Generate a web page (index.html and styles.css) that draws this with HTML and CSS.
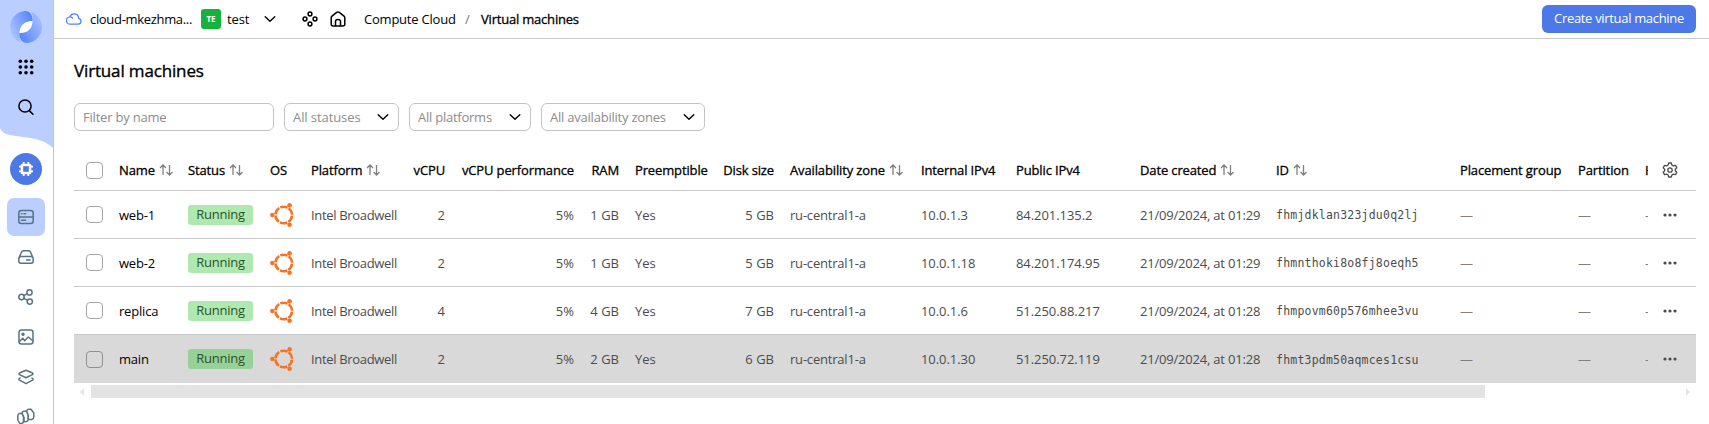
FILE: index.html
```html
<!DOCTYPE html>
<html lang="en">
<head>
<meta charset="utf-8">
<title>Virtual machines</title>
<link rel="stylesheet" href="styles.css">
</head>
<body>
<svg class="sprite" aria-hidden="true">
  <symbol id="chevron" viewBox="0 0 12 8"><path d="M1.200 1.700 6 6.200l4.800-4.500" fill="none" stroke="currentColor" stroke-width="1.400" stroke-linecap="round" stroke-linejoin="round"/></symbol>
  <symbol id="sort" viewBox="0 0 14 12"><path d="M1 4 4 1l3 3M4 1v10M7.500 8l3 3 3-3M10.500 11V1" fill="none" stroke="currentColor" stroke-width="1.300"/></symbol>
  <symbol id="dots" viewBox="0 0 16 6"><g fill="currentColor"><circle cx="3" cy="3" r="1.600"/><circle cx="8" cy="3" r="1.600"/><circle cx="13" cy="3" r="1.600"/></g></symbol>
  <symbol id="ubuntu" viewBox="0 0 24 24"><circle cx="13.700" cy="12" r="8.300" fill="none" stroke="#f47421" stroke-width="2.500" stroke-dasharray="7.500 1.190" stroke-dashoffset="-.6"/><g fill="#f47421"><circle cx="2.300" cy="12" r="2.200"/><circle cx="19.600" cy="2.300" r="2.300"/><circle cx="19.600" cy="21.700" r="2.300"/></g></symbol>
</svg>
<div class="app">
  <aside class="sidebar">
    <div class="brand">
      <svg class="brand-shape" viewBox="0 0 53 149"><path d="M0 0h53v148C42 137 25 138 10 135 4 134 1 131 0 128z" fill="#bacfff"/></svg>
      <svg class="logo" viewBox="0 0 32 32">
        <defs>
          <linearGradient id="lg1" x1="1" y1="0" x2="0" y2=".6"><stop offset="0" stop-color="#4d80fb"/><stop offset="1" stop-color="#a9c2ff"/></linearGradient>
          <linearGradient id="lg2" x1="0" y1="1" x2="1" y2=".3"><stop offset="0" stop-color="#4d80fb"/><stop offset="1" stop-color="#a4bfff"/></linearGradient>
        </defs>
        <path d="M15 0c5 0 8 4 7.500 10-9 .5-12 6-12.500 12-1 3-1 6 .5 9A16 16 0 0 1 15 0z" fill="url(#lg1)"/>
        <path d="M17 32c-5 0-8-4-7.500-10 9-.5 12-6 12.500-12 1-3 1-6-.5-9A16 16 0 0 1 17 32z" fill="url(#lg2)"/>
        <path d="M22.500 10C14 10 9.500 15 9.500 22c8.500 0 13-4.500 13-12z" fill="#fff"/>
      </svg>
      <svg class="icon apps" viewBox="0 0 16 16"><g fill="#000"><circle cx="2.300" cy="2.300" r="1.800"/><circle cx="8" cy="2.300" r="1.800"/><circle cx="13.700" cy="2.300" r="1.800"/><circle cx="2.300" cy="8" r="1.800"/><circle cx="8" cy="8" r="1.800"/><circle cx="13.700" cy="8" r="1.800"/><circle cx="2.300" cy="13.700" r="1.800"/><circle cx="8" cy="13.700" r="1.800"/><circle cx="13.700" cy="13.700" r="1.800"/></g></svg>
      <svg class="icon search" viewBox="0 0 16 16"><circle cx="7" cy="7" r="6.100" fill="none" stroke="#000" stroke-width="1.500"/><path d="m11.300 11.600 3.700 3.700" stroke="#000" stroke-width="1.500" stroke-linecap="round"/></svg>
    </div>
    <div class="service"><svg class="icon" viewBox="0 0 16 16"><path d="M5.700 1v14M10.300 1v14M1 5.700h14M1 10.300h14" stroke="#fff" stroke-width="1.800"/><rect x="2.700" y="2.700" width="10.600" height="10.600" rx="1.500" fill="#fff"/><rect x="5.200" y="5.200" width="5.600" height="5.600" fill="#4d79e8"/></svg></div>
    <nav class="nav">
      <a class="nav-item nav-item-active"><svg class="icon" viewBox="0 0 16 16"><rect x=".8" y="1.500" width="14.400" height="13" rx="2.500"/><path d="M1 8h14M3.500 4.800h.5M6 4.800h1.500M3.500 11.200h4"/></svg></a>
      <a class="nav-item"><svg class="icon" viewBox="0 0 16 16"><path d="M.8 9.300 3.300 3.500Q4 1.800 5.500 1.800h5q1.500 0 2.200 1.700l2.500 5.800V12q0 2.200-2.200 2.200H3Q.8 14.200.8 12zM1 9q.8-1.500 2-1.500h10q1.200 0 2 1.500M8.500 11h3.500"/></svg></a>
      <a class="nav-item"><svg class="icon" viewBox="0 0 16 16"><circle cx="3.500" cy="8" r="2.700"/><circle cx="11.500" cy="3.400" r="2.600"/><circle cx="11.800" cy="12.600" r="2.600"/><path d="m5.900 6.700 3.200-1.900M5.900 9.300l3.400 1.900"/></svg></a>
      <a class="nav-item"><svg class="icon" viewBox="0 0 16 16"><rect x="1" y="1" width="14" height="14" rx="2.500"/><circle cx="5" cy="5.300" r="1" fill="#587383"/><path d="m1.500 12.500 3.200-3.200 2 2.500L10.300 8l4.200 3.500"/></svg></a>
      <a class="nav-item"><svg class="icon" viewBox="0 0 16 16"><path d="M8 1.200 14.500 4q1 .7 0 1.600L8 8.700 1.500 5.600Q.5 4.700 1.500 4zM2 9l-.8.700q-.8.800.3 1.500L8 14.600l6.500-3.400q1.100-.7.300-1.500L14 9"/></svg></a>
      <a class="nav-item"><svg class="icon icon-wide" viewBox="0 0 18 18"><path d="M5 5.500H2.300Q.8 6 .8 8v4l2 3.500 2.500-.3q1.200-.5 1.200-2V9zM9.500 3.300H7Q5 3.500 5.200 5.500L7 9.500v4.300l2.500-.2q1.600-.4 1.500-2V7zM14 1.200h-2.500Q9.700 1.500 9.700 3.300L11.200 7v4.500l3.600-.1q2-.5 2-2.400V5z"/></svg></a>
    </nav>
  </aside>
  <div class="page">
    <header class="topbar">
      <svg class="icon cloud" viewBox="0 0 16 16"><path d="M4.300 13.200h7.900a3 3 0 0 0 .5-5.900C12.700 4.700 10.700 2.800 8.200 2.800c-2 0-3.600 1.200-4.300 3a3.700 3.700 0 0 0 .4 7.400zM3.900 5.900q1.700-.1 2.700 1.300" fill="none" stroke="#5282ff" stroke-width="1.300" stroke-linecap="round"/></svg>
      <span class="cloud-name">cloud-mkezhma...</span>
      <span class="folder-badge">TE</span>
      <span class="folder-name">test</span>
      <svg class="chevron folder-chevron"><use href="#chevron"/></svg>
      <svg class="icon services" viewBox="0 0 16 16"><g fill="none" stroke="#000" stroke-width="1.500"><circle cx="8" cy="3" r="1.900"/><circle cx="3" cy="8" r="1.900"/><circle cx="13" cy="8" r="1.900"/><circle cx="8" cy="13" r="1.900"/></g></svg>
      <svg class="icon home" viewBox="0 0 16 16"><path d="M1.200 6.800q0-1 .8-1.700L6.700 1.400q1.300-1 2.600 0L14 5.100q.8.700.8 1.700V13q0 2-2 2H3.200q-2 0-2-2zM5.500 15v-4.500Q5.500 8.500 8 8.500t2.500 2V15" fill="none" stroke="#000" stroke-width="1.500"/></svg>
      <span class="crumb">Compute Cloud</span>
      <span class="crumb-sep">/</span>
      <span class="crumb-current">Virtual machines</span>
      <button class="create">Create virtual machine</button>
    </header>
    <main class="content">
      <h1 class="title">Virtual machines</h1>
      <div class="filters">
        <div class="field field-name"><span>Filter by name</span></div>
        <div class="field field-status"><span>All statuses</span><svg class="chevron"><use href="#chevron"/></svg></div>
        <div class="field field-platform"><span>All platforms</span><svg class="chevron"><use href="#chevron"/></svg></div>
        <div class="field field-zone"><span>All availability zones</span><svg class="chevron"><use href="#chevron"/></svg></div>
      </div>
      <div class="table">
        <div class="row head">
          <div><i class="check"></i></div>
          <div>Name<svg class="sort"><use href="#sort"/></svg></div>
          <div>Status<svg class="sort"><use href="#sort"/></svg></div>
          <div>OS</div>
          <div>Platform<svg class="sort"><use href="#sort"/></svg></div>
          <div class="num">vCPU</div>
          <div class="num">vCPU performance</div>
          <div class="num">RAM</div>
          <div>Preemptible</div>
          <div class="num">Disk size</div>
          <div>Availability zone<svg class="sort"><use href="#sort"/></svg></div>
          <div>Internal IPv4</div>
          <div>Public IPv4</div>
          <div>Date created<svg class="sort"><use href="#sort"/></svg></div>
          <div>ID<svg class="sort"><use href="#sort"/></svg></div>
          <div>Placement group</div>
          <div>Partition</div>
          <div class="clip">Host</div>
          <div class="act"><svg class="gear" viewBox="0 0 16 16"><path d="M6.700 1h2.600l.6 2 1.500.9 2.100-.5 1.300 2.300L13.300 7.200v1.600l1.500 1.500-1.300 2.300-2.100-.5-1.500.9-.6 2H6.700l-.6-2-1.500-.9-2.100.5-1.300-2.300 1.500-1.500V7.200L1.200 5.700l1.300-2.300 2.100.5L6.100 3z"/><circle cx="8" cy="8" r="2.200"/></svg></div>
        </div>
        <div class="row">
          <div><i class="check"></i></div><div class="name">web-1</div><div><span class="badge">Running</span></div><div><svg class="os"><use href="#ubuntu"/></svg></div><div class="platform">Intel Broadwell</div><div class="num">2</div><div class="num">5%</div><div class="num">1 GB</div><div>Yes</div><div class="num">5 GB</div><div class="zone">ru-central1-a</div><div class="ip">10.0.1.3</div><div class="ip">84.201.135.2</div><div class="date">21/09/2024, at 01:29</div><div class="id">fhmjdklan323jdu0q2lj</div><div class="none">—</div><div class="none">—</div><div class="clip none">—</div><div class="act"><svg class="more"><use href="#dots"/></svg></div>
        </div>
        <div class="row">
          <div><i class="check"></i></div><div class="name">web-2</div><div><span class="badge">Running</span></div><div><svg class="os"><use href="#ubuntu"/></svg></div><div class="platform">Intel Broadwell</div><div class="num">2</div><div class="num">5%</div><div class="num">1 GB</div><div>Yes</div><div class="num">5 GB</div><div class="zone">ru-central1-a</div><div class="ip">10.0.1.18</div><div class="ip">84.201.174.95</div><div class="date">21/09/2024, at 01:29</div><div class="id">fhmnthoki8o8fj8oeqh5</div><div class="none">—</div><div class="none">—</div><div class="clip none">—</div><div class="act"><svg class="more"><use href="#dots"/></svg></div>
        </div>
        <div class="row">
          <div><i class="check"></i></div><div class="name">replica</div><div><span class="badge">Running</span></div><div><svg class="os"><use href="#ubuntu"/></svg></div><div class="platform">Intel Broadwell</div><div class="num">4</div><div class="num">5%</div><div class="num">4 GB</div><div>Yes</div><div class="num">7 GB</div><div class="zone">ru-central1-a</div><div class="ip">10.0.1.6</div><div class="ip">51.250.88.217</div><div class="date">21/09/2024, at 01:28</div><div class="id">fhmpovm60p576mhee3vu</div><div class="none">—</div><div class="none">—</div><div class="clip none">—</div><div class="act"><svg class="more"><use href="#dots"/></svg></div>
        </div>
        <div class="row row-hover">
          <div><i class="check"></i></div><div class="name">main</div><div><span class="badge">Running</span></div><div><svg class="os"><use href="#ubuntu"/></svg></div><div class="platform">Intel Broadwell</div><div class="num">2</div><div class="num">5%</div><div class="num">2 GB</div><div>Yes</div><div class="num">6 GB</div><div class="zone">ru-central1-a</div><div class="ip">10.0.1.30</div><div class="ip">51.250.72.119</div><div class="date">21/09/2024, at 01:28</div><div class="id">fhmt3pdm50aqmces1csu</div><div class="none">—</div><div class="none">—</div><div class="clip none">—</div><div class="act"><svg class="more"><use href="#dots"/></svg></div>
        </div>
      </div>
      <div class="scrollbar">
        <svg class="arrow" viewBox="0 0 4 8"><path d="M4 0v8L0 4z"/></svg>
        <div class="track"><div class="thumb"></div></div>
        <svg class="arrow" viewBox="0 0 4 8"><path d="M0 0v8l4-4z"/></svg>
      </div>
    </main>
  </div>
</div>
</body>
</html>
```
FILE: styles.css
```css
* { box-sizing: border-box; }
body { margin: 0; background: #fff; color: #000; font: 13px/18px "Open Sans", "Noto Sans", sans-serif; overflow: hidden; }
svg { display: block; flex: none; }
.sprite { position: absolute; width: 0; height: 0; }
.app { display: flex; height: 424px; overflow: hidden; }
.icon { width: 16px; height: 16px; }

.sidebar { width: 54px; flex: none; border-right: 1px solid #c4c4c8; }
.brand { position: relative; height: 149px; display: flex; flex-direction: column; align-items: center; padding: 11px 1px 0 0; }
.brand-shape { position: absolute; left: 0; top: 0; width: 53px; height: 149px; }
.logo { position: relative; width: 32px; height: 32px; }
.apps { position: relative; margin-top: 16px; }
.search { position: relative; margin-top: 24px; }
.service { width: 32px; height: 32px; margin: 4px 0 0 10px; border-radius: 50%; background: #4d79e8; display: flex; align-items: center; justify-content: center; }
.nav { margin: 13px 0 0 7px; display: flex; flex-direction: column; gap: 2px; width: 38px; }
.nav-item { height: 38px; flex: none; border-radius: 7px; display: flex; align-items: center; justify-content: center; }
.nav-item-active { background: #bacfff; }
.nav-item svg { fill: none; stroke: #587383; stroke-width: 1.5; stroke-linejoin: round; stroke-linecap: round; }
.nav-item .icon-wide { width: 18px; height: 18px; }

.page { flex: 1; min-width: 0; }
.topbar { height: 39px; border-bottom: 1px solid #c8c8c8; display: flex; align-items: center; padding: 0 13px 0 12px; white-space: nowrap; }
.cloud-name { width: 119px; padding-left: 8px; letter-spacing: -.32px; }
.folder-badge { width: 20px; height: 20px; border-radius: 3px; background: #16b33c; color: #fff; font: bold 8px/20px "Open Sans", sans-serif; text-align: center; }
.folder-name { width: 43px; padding-left: 6px; letter-spacing: -.1px; }
.chevron { width: 12px; height: 8px; }
.services { margin-left: 26px; }
.home { margin-left: 12px; }
.crumb { width: 119px; padding-left: 18px; letter-spacing: -.22px; }
.crumb-sep { width: 16px; color: #777; }
.crumb-current { -webkit-text-stroke: .3px currentColor; letter-spacing: -.2px; }
.create { margin-left: auto; width: 154px; height: 28px; padding: 0 0 2px; margin-bottom: 1px; border: 0; border-radius: 6px; background: #4d79e8; color: #fff; font: 13px/18px "Open Sans", sans-serif; letter-spacing: -.32px; }

.content { padding: 20px 13px 0 20px; }
.title { margin: 0; font-size: 17px; line-height: 24px; font-weight: 400; letter-spacing: -.15px; -webkit-text-stroke: .35px currentColor; }
.filters { display: flex; gap: 10px; margin-top: 20px; }
.field { height: 28px; border: 1px solid #c4c4c4; border-radius: 6px; padding: 0 9px 1px 8px; display: flex; align-items: center; justify-content: space-between; color: #8c8c8c; }
.field .chevron { color: #000; margin-top: 1px; }
.field-name { width: 200px; letter-spacing: -.2px; }
.field-status { width: 115px; letter-spacing: -.08px; }
.field-platform { width: 122px; letter-spacing: -.24px; }
.field-zone { width: 164px; letter-spacing: -.22px; }

.table { margin-top: 15px; }
.row { display: grid; grid-template-columns: 37px 69px 82px 41px 102px 48px 129px 45px 89px 66px 131px 95px 124px 136px 184px 118px 67px 11px 48px; height: 48px; align-items: center; border-top: 1px solid #c8c8c8; color: #4c4c4c; white-space: nowrap; }
.row > div { padding-left: 8px; display: flex; align-items: center; height: 100%; min-width: 0; }
.row > .num { padding: 0 8px 0 0; justify-content: flex-end; }
.row > .clip { overflow: hidden; }
.row > .act { padding: 0 4px 0 0; justify-content: center; }
.head { height: 44px; border-top: 0; color: #000; padding-top: 4px; letter-spacing: -.13px; -webkit-text-stroke: .3px currentColor; }
.row-hover { height: 49px; background: #d9d9d9; }
.check { width: 17px; height: 17px; margin-left: 4px; border: 1px solid #a6a6a6; border-radius: 4px; flex: none; }
.row-hover .check { border-color: #8f8f8f; }
.sort { width: 14px; height: 12px; margin-left: 4px; color: #808080; }
.row > .name { color: #000; letter-spacing: -.2px; }
.row > .platform { letter-spacing: -.33px; }
.row > .zone { letter-spacing: -.2px; }
.row > .ip { letter-spacing: -.06px; }
.badge { width: 65px; height: 20px; border-radius: 3px; background: #b0e9b0; color: #2b532b; text-align: center; line-height: 19px; letter-spacing: -.25px; }
.row-hover .badge { background: #98d198; }
.os { width: 24px; height: 24px; }
.row > .id { font: 11.5px "DejaVu Sans Mono", monospace; letter-spacing: .21px; padding-top: 1px; }
.row > .date { letter-spacing: -.2px; }
.row > .none { color: #808080; }
.gear { width: 16px; height: 16px; fill: none; stroke: #4c4c4c; stroke-width: 1.3; stroke-linejoin: round; }
.more { width: 16px; height: 6px; color: #4c4c4c; }

.scrollbar { display: flex; align-items: center; height: 17px; padding: 0 6px; }
.arrow { width: 4px; height: 8px; fill: #e3e3e3; }
.track { flex: 1; padding-left: 7px; }
.thumb { width: 1394px; height: 13px; background: #e3e3e3; }
```
